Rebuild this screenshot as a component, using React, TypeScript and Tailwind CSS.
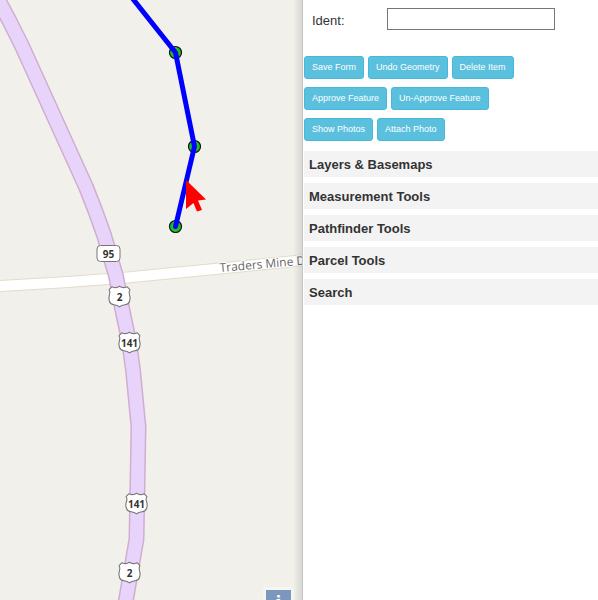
import { useState } from "react";
import { cx } from "class-variance-authority";

type Point = { x: number; y: number };

type ShieldProps = Point & {
  label: string;
};

const vertices: Point[] = [
  { x: 175.5, y: 52.5 },
  { x: 194.5, y: 146.5 },
  { x: 175.5, y: 226.5 },
];

const usRoutes: ShieldProps[] = [
  { x: 119.5, y: 296.5, label: "2" },
  { x: 129.5, y: 342.5, label: "141" },
  { x: 136.5, y: 503.5, label: "141" },
  { x: 129.5, y: 572.5, label: "2" },
];

const actionRows = [
  ["Save Form", "Undo Geometry", "Delete Item"],
  ["Approve Feature", "Un-Approve Feature"],
  ["Show Photos", "Attach Photo"],
];

const sections = [
  "Layers & Basemaps",
  "Measurement Tools",
  "Pathfinder Tools",
  "Parcel Tools",
  "Search",
];

const HIGHWAY =
  "M-7 -10 L9 20 L22 46 L86 187 L95 210 L104 235 L116 276 L122 308 L129 341 L133 370 L138.5 427 L136.5 539 L126 600 L124 612";
const LOCAL_ROAD = "M-5 286.3 L60 282.5 L122 278 L220 268.5 L310 259.5";

function UsShield({ x, y, label }: ShieldProps) {
  return (
    <g transform={`translate(${x} ${y})`}>
      <path
        d="M-7.5 -9.8 Q-3.5 -7.8 0 -10.2 Q3.5 -7.8 7.5 -9.8 L10.4 -6.8 Q9 -4.5 10 -2 Q11.4 2 10 5 Q9 7.8 5.5 8.2 Q2 8.6 0 10.4 Q-2 8.6 -5.5 8.2 Q-9 7.8 -10 5 Q-11.4 2 -10 -2 Q-9 -4.5 -10.4 -6.8 Z"
        fill="#fff"
        stroke="#777"
        strokeWidth="1.1"
        strokeLinejoin="round"
      />
      <text y="4" textAnchor="middle" className="fill-[#333] font-['Open_Sans',sans-serif] text-[10px] font-bold">
        {label}
      </text>
    </g>
  );
}

function MapView() {
  return (
    <div className="relative min-h-screen overflow-hidden bg-[#f1f0eb]">
      <svg
        viewBox="0 0 303 600"
        preserveAspectRatio="xMinYMin slice"
        className="absolute inset-0 h-full w-full"
        fill="none"
      >
        <path d={LOCAL_ROAD} stroke="#e3dcc8" strokeWidth="12" />
        <path d={LOCAL_ROAD} stroke="#fff" strokeWidth="10" />
        <path d={HIGHWAY} stroke="#cfaed0" strokeWidth="16" strokeLinejoin="round" />
        <path d={HIGHWAY} stroke="#e8d4fa" strokeWidth="13" strokeLinejoin="round" />

        <text
          transform="translate(220 272) rotate(-5)"
          stroke="#fff"
          strokeWidth="2"
          strokeLinejoin="round"
          paintOrder="stroke"
          className="fill-[#666] font-['Open_Sans',sans-serif] text-[12px] font-medium"
        >
          Traders Mine Dr
        </text>

        <rect x="97" y="245.5" width="23" height="16" rx="3.5" fill="#fff" stroke="#777" />
        <text x="108.5" y="257.5" textAnchor="middle" className="fill-[#333] font-['Open_Sans',sans-serif] text-[10px] font-bold">
          95
        </text>
        {usRoutes.map((route) => (
          <UsShield key={route.y} {...route} />
        ))}

        {vertices.map((p) => (
          <circle key={p.y} cx={p.x} cy={p.y} r="6" fill="#1dc421" stroke="#111" strokeWidth="1.2" />
        ))}
        <path
          d="M129 -6 L175.5 52.5 L194.5 146.5 L175.5 226.5"
          stroke="#00f"
          strokeWidth="5"
          strokeLinecap="round"
          strokeLinejoin="round"
        />
        <path
          d="M186 180 L206 199.5 L198 200.5 L202 210 L197 211.5 L193.5 203 L186 209 Z"
          fill="#f00"
        />
      </svg>

      <button
        type="button"
        aria-label="Attributions"
        className="absolute right-[9px] -bottom-[18px] h-[31px] w-[31px] rounded-xs border-3 border-[#f5f5f2] bg-[#7b98bc] font-serif text-[18px] leading-6 font-bold text-white"
      >
        i
      </button>
      <div className="pointer-events-none absolute inset-y-0 right-0 w-2.5 border-r border-[#c4c4c2] bg-gradient-to-r from-transparent to-black/10" />
    </div>
  );
}

function ToolPanel() {
  const [active, setActive] = useState<string | null>(null);

  return (
    <div className="bg-white pl-px">
      <form onSubmit={(e) => e.preventDefault()}>
        <div className="flex items-center pt-[7px] pl-2">
          <label htmlFor="ident" className="w-[75px] pt-1 text-[13px] leading-5 text-[#333]">
            Ident:
          </label>
          <input
            id="ident"
            type="text"
            className="h-[22px] w-[168px] border border-[#767676] bg-white px-1 text-[13px] outline-none"
          />
        </div>
        <div className="mt-[25px] flex flex-col gap-2">
          {actionRows.map((row) => (
            <div key={row[0]} className="flex gap-1">
              {row.map((label) => (
                <button
                  key={label}
                  type="button"
                  className="h-[23px] rounded-[3px] border border-[#46b8da] bg-[#5bc0de] px-[7px] text-[9px] whitespace-nowrap text-white"
                >
                  {label}
                </button>
              ))}
            </div>
          ))}
        </div>
      </form>

      <div className="mt-[10px] flex flex-col gap-[6px]">
        {sections.map((title) => (
          <button
            key={title}
            type="button"
            onClick={() => setActive(active === title ? null : title)}
            className={cx(
              "h-[26px] w-full px-[5px] pt-[2px] text-left text-[13px] leading-6 font-bold text-[#333]",
              active === title ? "bg-[#e6e6e6]" : "bg-[#f3f3f3]"
            )}
          >
            {title}
          </button>
        ))}
      </div>
    </div>
  );
}

export default function App() {
  return (
    <div className="grid min-h-screen grid-cols-[303fr_295fr] bg-white font-['Liberation_Sans',Arial,sans-serif]">
      <MapView />
      <ToolPanel />
    </div>
  );
}
